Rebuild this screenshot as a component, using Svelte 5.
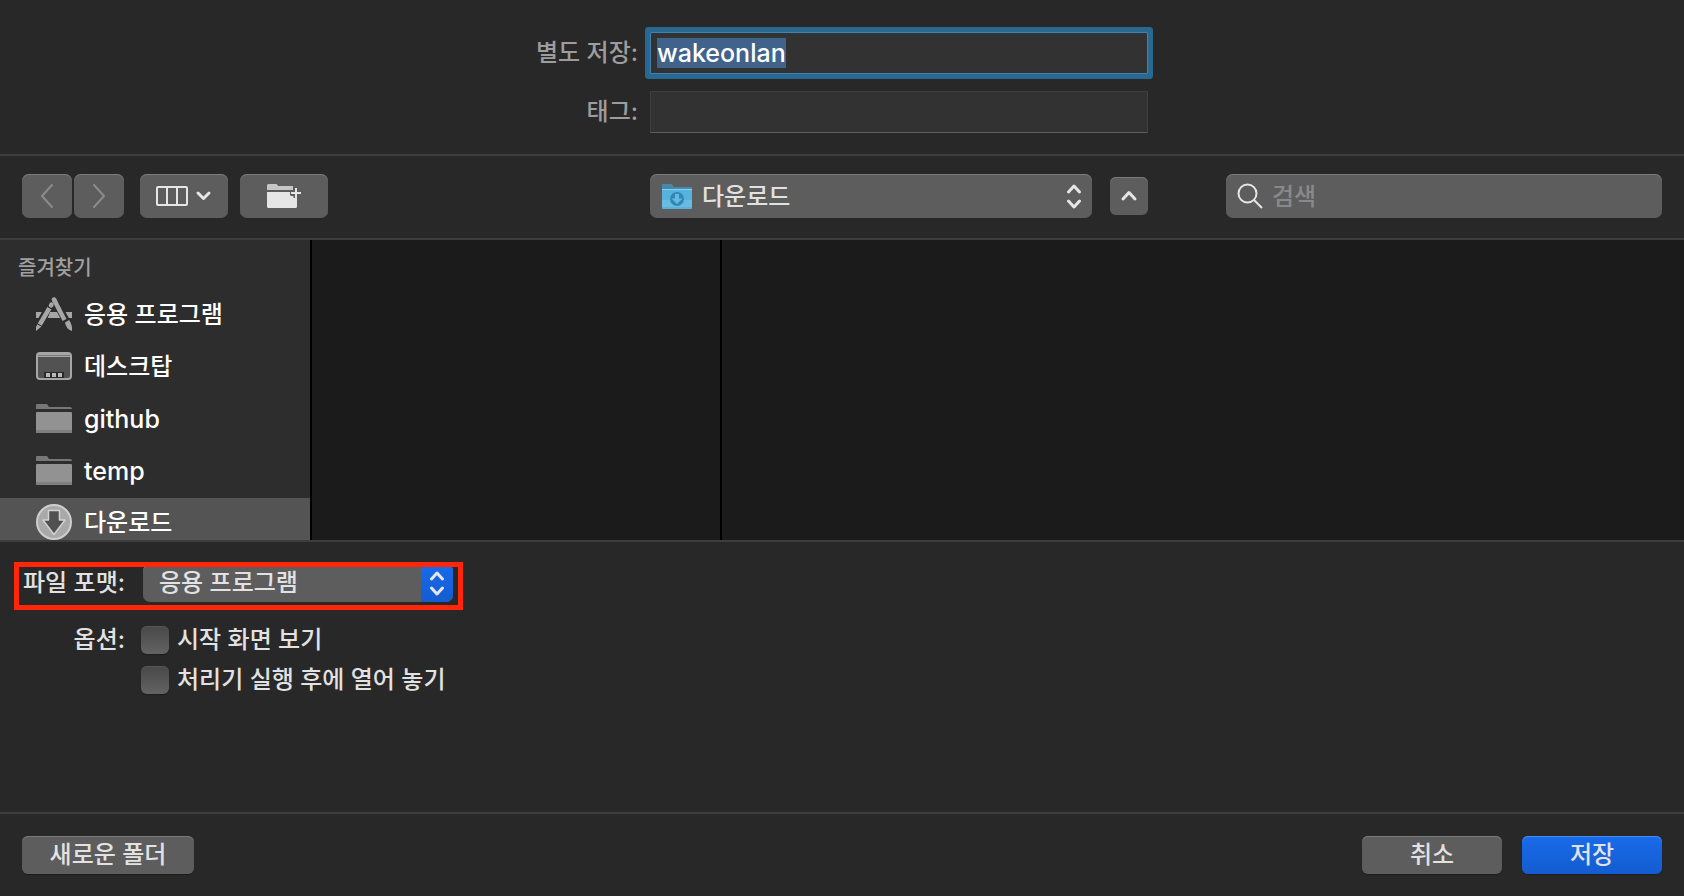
<script lang="ts">
	import { onMount } from 'svelte';

	type Place = { name: string; icon: 'apps' | 'desktop' | 'folder' | 'downloads' };

	const places: Place[] = [
		{ name: '응용 프로그램', icon: 'apps' },
		{ name: '데스크탑', icon: 'desktop' },
		{ name: 'github', icon: 'folder' },
		{ name: 'temp', icon: 'folder' },
		{ name: '다운로드', icon: 'downloads' }
	];

	let fileName = $state('wakeonlan');
	let tags = $state('');
	let query = $state('');
	let selected = $state('다운로드');
	let format = $state('응용 프로그램');
	let showStartup = $state(false);
	let stayOpen = $state(false);
	let nameField: HTMLInputElement;

	onMount(() => {
		nameField.focus();
		nameField.select();
	});
</script>

<svelte:head>
	<title>별도 저장</title>
</svelte:head>

<div class="dialog">
	<header class="naming">
		<label for="file-name">별도 저장:</label>
		<input id="file-name" class="latin" type="text" spellcheck="false" autocomplete="off" bind:this={nameField} bind:value={fileName} />
		<label for="file-tags">태그:</label>
		<input id="file-tags" type="text" bind:value={tags} />
	</header>

	<div class="toolbar">
		<div class="tools">
			<div class="nav">
				<button class="tool" aria-label="뒤로" disabled>
					<svg width="14" height="26" viewBox="0 0 14 26"><path d="M12 2 2 13l10 11" /></svg>
				</button>
				<button class="tool" aria-label="앞으로" disabled>
					<svg width="14" height="26" viewBox="0 0 14 26"><path d="m2 2 10 11L2 24" /></svg>
				</button>
			</div>
			<button class="tool wide" aria-label="보기">
				<svg width="56" height="20" viewBox="0 0 56 20">
					<rect x="1" y="1" width="30" height="18" rx="1" />
					<path d="M11 1v18M21 1v18" />
					<path class="thick" d="m42 7 5.500 5.500L53 7" />
				</svg>
			</button>
			<button class="tool wide" aria-label="그룹">
				<svg class="solid" width="34" height="28" viewBox="0 0 34 28">
					<path fill="#c6c6c6" d="M0 8V3.500Q0 2 1.500 2H9q1 0 1.500 1l.5 1h15v4z" />
					<path fill="#e6e6e6" d="M0 10h24v4h3v2h3v8.500Q30 26 28.500 26h-27Q0 26 0 24.500z" />
					<path fill="none" stroke="#5d5d5d" stroke-width="5" d="M29 4v12M23 11h12" />
					<path fill="none" stroke="#e6e6e6" stroke-width="2" d="M29 6v10M24 11h10" />
				</svg>
			</button>
		</div>

		<div class="where">
			<div class="popup folder-popup">
				<svg class="lead" width="30" height="25" viewBox="0 0 30 25">
					<path fill="#4789ad" d="M0 6V1q0-1 1-1h8q1 0 2 2l1 1h17q1 0 1 1v3H0z" />
					<path fill="#55b3de" d="M0 5h30v19q0 1-1 1H1q-1 0-1-1z" />
					<path fill="#69bce0" d="M0 16h30v7H0z" />
					<path stroke="#82d3f2" d="M0 5.500h30" />
					<circle cx="15" cy="15" r="7" fill="#3285b5" />
					<path fill="#63bbe2" d="M13 10h4v4.500h3.500L15 20l-5.500-5.500H13z" />
				</svg>
				<select aria-label="위치" bind:value={selected}>
					{#each places as place (place.name)}
						<option>{place.name}</option>
					{/each}
				</select>
				<svg class="arrows" width="16" height="25" viewBox="0 0 16 25"><path d="M2.500 8 8 2l5.500 6M2.500 17 8 23l5.500-6" /></svg>
			</div>
			<button class="tool collapse" aria-label="접기">
				<svg width="18" height="12" viewBox="0 0 18 12"><path class="thick" d="m3 9 6-6.500L15 9" /></svg>
			</button>
		</div>

		<div class="search">
			<svg width="26" height="26" viewBox="0 0 26 26"><circle cx="10.500" cy="10.500" r="9" /><path d="m17 17 8 8" /></svg>
			<input type="search" aria-label="검색" placeholder="검색" bind:value={query} />
		</div>
	</div>

	<main class="browser">
		<nav class="sidebar" aria-label="즐겨찾기">
			<h2>즐겨찾기</h2>
			<ul>
				{#each places as place (place.name)}
					<li>
						<button class="place" class:current={place.name === selected} onclick={() => (selected = place.name)}>
							{#if place.icon === 'apps'}
								<svg width="36" height="34" viewBox="0 0 36 34">
									<path fill="#a6a6a6" d="M0 15h36v6H0z" />
									<g stroke="#2d2d2d" stroke-width="8">
										<path d="M16 5 2 30M17 1l17 30" />
									</g>
									<path fill="#a6a6a6" d="M14 15h7l3 6H12z" />
									<g stroke="#a6a6a6" stroke-width="4.500">
										<path stroke-linecap="round" d="m18 2.500 1 2" />
										<path d="m18 2.500 10.500 20.500" />
										<path stroke-linecap="round" d="M15 8.500l.5-1" />
										<path d="M13.500 11 3.500 28" />
									</g>
									<path fill="#a6a6a6" d="m1.500 27 4 2.500L0 34v-4zM29 25.500l4-2.500q4 5 2.800 11-5.800-2-6.800-8.500z" />
									<path stroke="#2d2d2d" d="m11.500 9.500 5 3M1 26.500l5 3M27 25.500l6-3.500" />
								</svg>
							{:else if place.icon === 'desktop'}
								<svg width="36" height="28" viewBox="0 0 36 28">
									<rect x="1" y="1" width="34" height="26" rx="3" fill="#525252" stroke="#a6a6a6" stroke-width="2" />
									<path fill="#a6a6a6" d="M2 1h32v4H2z" />
									<path stroke="#7b7b7b" d="M2 3.500h32" />
									<path fill="#292929" d="M8 20h20v6H8z" />
									<path fill="#b8b8b8" d="M10 21h4v4h-4zM16 21h4v4h-4zM22 21h4v4h-4z" />
								</svg>
							{:else if place.icon === 'folder'}
								<svg width="36" height="30" viewBox="0 0 36 30">
									<path fill="#777" d="M0 6V2q0-1 1-1h10l2 3h21q2 0 2 2z" />
									<path fill="#929292" d="M0 10q0-1 1-1h34q1 0 1 1v19q0 1-1 1H1q-1 0-1-1z" />
									<path fill="#7f7f7f" d="M0 27h36v2q0 1-1 1H1q-1 0-1-1z" />
								</svg>
							{:else}
								<svg width="36" height="36" viewBox="0 0 36 36">
									<circle cx="18" cy="18" r="17" fill="#a9a9a9" stroke="#cfcfcf" stroke-width="2" />
									<path fill="#505050" stroke="#d2d2d2" stroke-width="1.500" stroke-linejoin="round" d="M12.500 6.500h11V16h5.500L18 30.500 7 16h5.500z" />
								</svg>
							{/if}
							<span class:latin={place.icon === 'folder'}>{place.name}</span>
						</button>
					</li>
				{/each}
			</ul>
		</nav>
		<div class="column"></div>
		<div class="preview"></div>
	</main>

	<section class="options">
		<div class="format">
			<label for="file-format">파일 포맷:</label>
			<div class="popup format-popup">
				<select id="file-format" bind:value={format}>
					<option>응용 프로그램</option>
					<option>스크립트</option>
					<option>텍스트</option>
				</select>
				<span class="cap">
					<svg width="16" height="25" viewBox="0 0 16 25"><path d="M2.500 8 8 2l5.500 6M2.500 17 8 23l5.500-6" /></svg>
				</span>
			</div>
		</div>
		<div class="checks">
			<span class="caption">옵션:</span>
			<div class="check-list">
				<label class="check"><input type="checkbox" bind:checked={showStartup} />시작 화면 보기</label>
				<label class="check"><input type="checkbox" bind:checked={stayOpen} />처리기 실행 후에 열어 놓기</label>
			</div>
		</div>
	</section>

	<footer>
		<button class="push new-folder">새로운 폴더</button>
		<button class="push">취소</button>
		<button class="push primary">저장</button>
	</footer>
</div>

<style>
	:global(body) {
		margin: 0;
		background: #282828;
	}
	.dialog {
		--line: #3d3d3d;
		--control: #5d5d5d;
		--text: #e2e2e2;
		display: flex;
		flex-direction: column;
		min-height: 100vh;
		background: #282828;
		color: var(--text);
		font: 500 24px/32px Inter, 'Noto Sans CJK KR', sans-serif;
	}
	.dialog * {
		box-sizing: border-box;
	}
	button,
	input,
	select {
		margin: 0;
		border: 0;
		font: inherit;
		color: inherit;
	}
	svg {
		display: block;
		flex: none;
		fill: none;
	}
	.latin {
		font-size: 25px;
	}

	.naming {
		display: grid;
		grid-template-columns: auto 498px;
		justify-content: center;
		align-items: center;
		gap: 17px 12px;
		padding: 32px 22px 21px;
		border-bottom: 2px solid var(--line);
	}
	.naming label {
		text-align: right;
		color: #9d9d9d;
	}
	.naming input {
		height: 42px;
		padding: 0 6px;
		border: 1px solid #3f3f3f;
		border-bottom-color: #5c5c5c;
		background: #323232;
		color: #fff;
		outline: 0;
	}
	.naming input:focus {
		border-color: #3d83b5;
		border-radius: 1px;
		box-shadow: 0 0 0 5px #296891;
	}
	.naming input::selection {
		background: #3f638b;
		color: #fff;
	}

	.toolbar {
		display: grid;
		grid-template-columns: 628fr 576fr 436fr;
		align-items: center;
		padding: 18px 22px 20px;
		border-bottom: 2px solid var(--line);
	}
	.tools,
	.nav,
	.where {
		display: flex;
		align-items: center;
	}
	.tools {
		gap: 12px;
	}
	.nav {
		gap: 2px;
		margin-right: 4px;
	}
	.tool {
		display: grid;
		place-items: center;
		width: 50px;
		height: 44px;
		padding: 0;
		border-radius: 7px;
		background: var(--control);
		box-shadow: inset 0 1px #7a7a7a;
	}
	.tool.wide {
		width: 88px;
	}
	.tool svg:not(.solid) {
		stroke: #e6e6e6;
		stroke-width: 2;
		stroke-linecap: round;
		stroke-linejoin: round;
	}
	.tool .thick {
		stroke-width: 3;
	}
	.tool:disabled svg:not(.solid) {
		stroke: #8b8b8b;
	}
	.where {
		gap: 18px;
		padding-right: 78px;
	}
	.tool.collapse {
		width: 38px;
		height: 38px;
		border-radius: 6px;
	}
	.popup {
		position: relative;
		flex: 1;
	}
	.popup select {
		display: block;
		width: 100%;
		appearance: none;
		border-radius: 7px;
		background: var(--control);
		box-shadow: inset 0 1px #7a7a7a;
	}
	.folder-popup select {
		height: 44px;
		padding: 2px 40px 0 52px;
	}
	.popup svg {
		stroke-linecap: round;
		stroke-linejoin: round;
	}
	.lead,
	.arrows {
		position: absolute;
		top: 10px;
		pointer-events: none;
	}
	.lead {
		left: 12px;
	}
	.arrows {
		right: 10px;
	}
	.arrows,
	.cap svg {
		stroke: #e6e6e6;
		stroke-width: 3;
	}
	.search {
		display: flex;
		align-items: center;
		gap: 9px;
		height: 44px;
		padding: 0 11px;
		border-radius: 7px;
		background: var(--control);
		box-shadow: inset 0 1px #7a7a7a;
	}
	.search svg {
		stroke: #e6e6e6;
		stroke-width: 2;
	}
	.search input {
		flex: 1;
		min-width: 0;
		padding: 2px 0 0;
		background: none;
		appearance: none;
		outline: 0;
	}
	.search input::placeholder {
		color: #898989;
	}

	.browser {
		display: flex;
		height: 302px;
		border-bottom: 2px solid var(--line);
		background: #1b1b1b;
		overflow: hidden;
	}
	.sidebar {
		width: 312px;
		padding-top: 12px;
		border-right: 2px solid #000;
		background: #2d2d2d;
	}
	.sidebar h2 {
		margin: 0 0 6px;
		padding-left: 18px;
		font-size: 20px;
		font-weight: 500;
		color: #a0a0a0;
	}
	.sidebar ul {
		display: grid;
		gap: 4px;
		margin: 0;
		padding: 0;
		list-style: none;
	}
	.place {
		display: flex;
		align-items: center;
		gap: 12px;
		width: 100%;
		height: 48px;
		padding: 0 36px;
		background: none;
		color: #fff;
		text-align: left;
	}
	.place span {
		padding-top: 2px;
	}
	.place.current {
		background: #545454;
	}
	.column {
		width: 410px;
		border-right: 2px solid #000;
	}
	.preview {
		flex: 1;
	}

	.options {
		flex: 1;
		padding: 20px 14px;
	}
	.format {
		position: relative;
		display: flex;
		align-items: center;
		gap: 18px;
		width: 449px;
		height: 48px;
		padding: 0 10px 6px 5px;
	}
	/* highlight frame, drawn over the row */
	.format::after {
		content: '';
		position: absolute;
		inset: 0;
		border: 5px solid #ff260a;
		pointer-events: none;
	}
	.format label {
		width: 106px;
		text-align: right;
		white-space: nowrap;
	}
	.format-popup select {
		height: 38px;
		padding: 0 40px 0 16px;
	}
	.cap {
		position: absolute;
		top: 0;
		right: 0;
		display: grid;
		place-items: center;
		width: 32px;
		height: 38px;
		border-radius: 0 7px 7px 0;
		background: linear-gradient(#186bea, #145cd0);
		pointer-events: none;
	}
	.checks {
		display: flex;
		gap: 16px;
		margin-top: 14px;
	}
	.caption {
		width: 111px;
		text-align: right;
	}
	.check-list {
		display: grid;
		gap: 8px;
	}
	.check {
		display: flex;
		align-items: center;
		gap: 8px;
	}
	.check input {
		appearance: none;
		width: 28px;
		height: 28px;
		border-radius: 6px;
		background: linear-gradient(#484848, #636363);
		box-shadow: inset 0 1px #555, 0 1px 1px #1d1d1d;
	}
	.check input:checked {
		background: #186bea;
	}

	footer {
		display: flex;
		gap: 20px;
		padding: 22px;
		border-top: 2px solid var(--line);
	}
	.push {
		width: 140px;
		height: 38px;
		padding: 0;
		border-radius: 6px;
		background: var(--control);
		box-shadow: inset 0 1px #7a7a7a, 0 1px 1px #1d1d1d;
	}
	.push.new-folder {
		width: 172px;
		margin-right: auto;
	}
	.push.primary {
		background: linear-gradient(#186bea, #145cd0);
		box-shadow: inset 0 1px #4a8df0, 0 1px 1px #1d1d1d;
	}
</style>
